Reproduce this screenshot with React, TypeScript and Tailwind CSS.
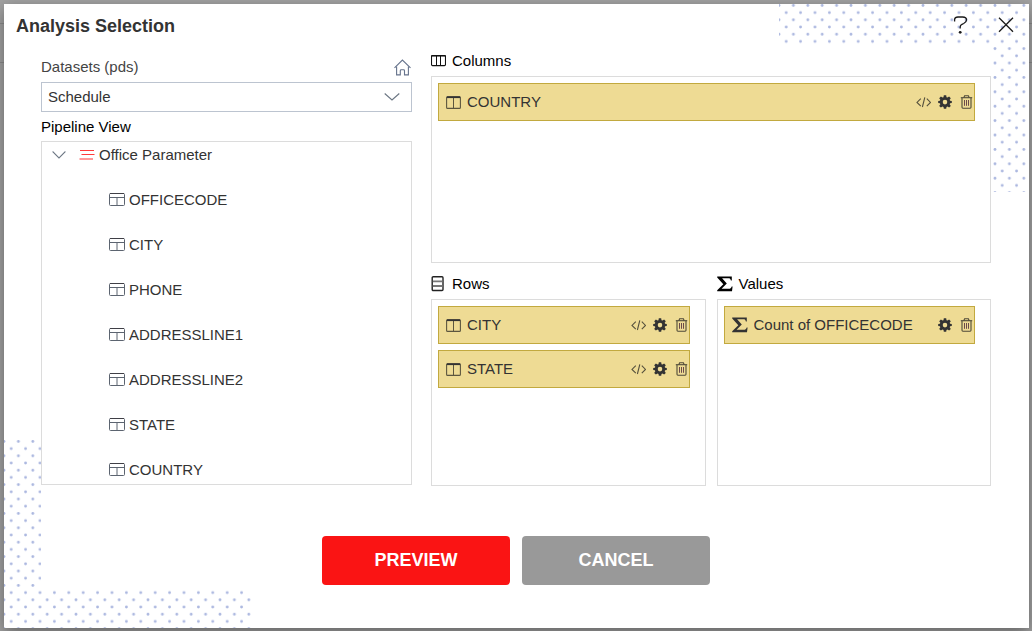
import { useState, type ReactNode } from 'react'

interface Field {
  name: string
  kind: 'dimension' | 'measure'
}

const DATASETS = ['Schedule']

const OFFICE_FIELDS = ['OFFICECODE', 'CITY', 'PHONE', 'ADDRESSLINE1', 'ADDRESSLINE2', 'STATE', 'COUNTRY']

const INITIAL_COLUMNS: Field[] = [{ name: 'COUNTRY', kind: 'dimension' }]
const INITIAL_ROWS: Field[] = [
  { name: 'CITY', kind: 'dimension' },
  { name: 'STATE', kind: 'dimension' },
]
const INITIAL_VALUES: Field[] = [{ name: 'Count of OFFICECODE', kind: 'measure' }]

function Dots({ id, className }: { id: string; className: string }) {
  return (
    <svg aria-hidden="true" width="250" height="188" className={className}>
      <defs>
        <pattern id={id} width="14.4" height="14.4" patternUnits="userSpaceOnUse">
          <circle cx="0" cy="1.5" r="1.4" fill="#aab6df" />
          <circle cx="14.4" cy="1.5" r="1.4" fill="#aab6df" />
          <circle cx="7.2" cy="8.7" r="1.4" fill="#aab6df" />
        </pattern>
      </defs>
      <rect width="250" height="188" fill={`url(#${id})`} />
    </svg>
  )
}

function HelpIcon() {
  return (
    <svg width="16" height="20" viewBox="0 0 16 20" fill="none" stroke="#1a1a1a" strokeWidth="1.3">
      <path d="M2.6 6.4V4.6C2.6 2.8 4 2 6 2h4.6c2.4 0 3.9 1 3.9 3 0 1.8-1.2 2.7-2.8 3.5L10 9.3c-1.3.7-1.8 1.4-1.8 2.6v1.5" />
      <circle cx="8.2" cy="17.3" r="1.4" fill="#1a1a1a" stroke="none" />
    </svg>
  )
}

function CloseIcon() {
  return (
    <svg width="16" height="16" viewBox="0 0 16 16" stroke="#1a1a1a" strokeWidth="1.3">
      <path d="M1 .8l14 14M15 .8L1 14.8" />
    </svg>
  )
}

function HomeIcon() {
  return (
    <svg width="18" height="17" viewBox="0 0 18 17" fill="none" stroke="#66738c" strokeWidth="1.1">
      <path d="M.5 8.9L8.4 1.1l8.1 7.8" />
      <path d="M2.6 7.5v8.4h3.7v-4.2c0-.6.3-.9.9-.9h2.4c.6 0 .9.3.9.9v4.2h3.9V7.5" />
    </svg>
  )
}

function ChevronIcon({ width, className }: { width: number; className?: string }) {
  return (
    <svg width={width} height="8" viewBox="0 0 16 8" preserveAspectRatio="none" fill="none" stroke="#6b7683" strokeWidth="1.1" className={className}>
      <path d="M.7.5L8 7 15.3.5" />
    </svg>
  )
}

function ListIcon() {
  return (
    <svg width="16" height="12" viewBox="0 0 16 12" fill="none">
      <path d="M1 1.5h14" stroke="#ff3b3b" />
      <path d="M2.5 5.5h13" stroke="#ff3b3b" />
      <path d="M.5 10h13.5" stroke="#ff8080" strokeWidth="1.6" />
    </svg>
  )
}

function TableIcon() {
  return (
    <svg width="16" height="14" viewBox="0 0 16 14" fill="none" stroke="#5c6470">
      <rect x=".5" y=".5" width="15" height="12" rx="1" />
      <path d="M.5 4.5h15M8 4.5v8" />
      <path d="M1 .5h14" stroke="#3f3f46" />
    </svg>
  )
}

function ColumnsIcon() {
  return (
    <svg width="15" height="12" viewBox="0 0 15 12" fill="none" stroke="#111">
      <rect x=".5" y=".6" width="14" height="10" rx="1" strokeWidth="1.1" />
      <path d="M5.5 1v9.6M9.5 1v9.6" />
      <path d="M.5.7h14" strokeWidth="1.4" />
    </svg>
  )
}

function RowsIcon() {
  return (
    <svg width="15" height="16" viewBox="0 0 15 16" fill="none" stroke="#222">
      <rect x="1.2" y=".7" width="10.8" height="13.8" rx="1" strokeWidth="1.4" />
      <path d="M1.8 5.3h9.6M1.8 10h9.6" stroke="#777" strokeWidth="1.8" />
    </svg>
  )
}

function SplitIcon() {
  return (
    <svg width="15" height="13" viewBox="0 0 15 13" fill="none" stroke="#5c563f">
      <rect x=".6" y=".8" width="13.8" height="11.6" rx="1" strokeWidth="1.1" />
      <path d="M7.5 1v11" />
      <path d="M.8 1.2h13.4" stroke="#333" strokeWidth="1.8" />
    </svg>
  )
}

function SigmaIcon({ color }: { color: string }) {
  return (
    <svg width="16" height="16" viewBox="0 0 16 16" fill={color}>
      <path d="M.2.4h14.6v4h-.9c-.4-1.5-1-2.1-2.6-2.1H5.1l4.7 5.2-5.2 5.3h7c1.8 0 2.6-.7 3.1-2.4h.9l-.6 4.9H.2v-1L6.3 8.3.2 1.4z" />
    </svg>
  )
}

function CodeIcon() {
  return (
    <svg width="15" height="14" viewBox="0 0 15 14" fill="none" stroke="#55503c" strokeWidth="1.1">
      <path d="M4.8 3.6L1 7.4l3.8 3.8M10.8 3.6l3.7 3.8-3.7 3.8M8.8 2.4L6.4 12" />
    </svg>
  )
}

function GearIcon() {
  return (
    <svg width="14" height="14" viewBox="0 0 14 14" fill="#333">
      <path
        fillRule="evenodd"
        d="M5.8.3h2.4l.3 1.9 1 .4 1.6-1.1 1.7 1.7-1.1 1.6.4 1 1.7.3v1.9l-1.7.3-.4 1 1.1 1.6-1.7 1.7-1.6-1.1-1 .4-.3 1.8H5.8l-.3-1.8-1-.4-1.6 1.1-1.7-1.7 1.1-1.6-.4-1L.2 8V6.1l1.7-.3.4-1-1.1-1.6 1.7-1.7 1.6 1.1 1-.4zM7 4.8a2.3 2.3 0 100 4.6 2.3 2.3 0 000-4.6z"
      />
    </svg>
  )
}

function TrashIcon() {
  return (
    <svg width="14" height="14" viewBox="0 0 14 14" fill="none" stroke="#4f4a38">
      <path d="M1.8 2.7h11.4" strokeWidth="1.1" />
      <path d="M4.8 2.7L5.6.8h3.8l.8 1.9" strokeWidth="1.1" />
      <path d="M3 2.9v9.4c0 .6.3.9.9.9h7.2c.6 0 .9-.3.9-.9V2.9" strokeWidth="1.1" />
      <path d="M5.5 5v5.8M7.5 5v5.8M9.5 5v5.8" stroke="#6b4a4a" />
    </svg>
  )
}

function FieldChip({ field, onRemove }: { field: Field; onRemove: () => void }) {
  return (
    <li className="flex h-[38px] items-center gap-[6px] border border-[#c2a93f] bg-[#eedb94] pr-px pl-[7px]">
      {field.kind === 'measure' ? <SigmaIcon color="#333" /> : <SplitIcon />}
      <span className="min-w-0 flex-1 truncate text-[#333]">{field.name}</span>
      <div className="flex items-center gap-[7px]">
        {field.kind === 'dimension' && (
          <button type="button" aria-label={`Edit expression for ${field.name}`}><CodeIcon /></button>
        )}
        <button type="button" aria-label={`Settings for ${field.name}`}><GearIcon /></button>
        <button type="button" aria-label={`Remove ${field.name}`} onClick={onRemove}><TrashIcon /></button>
      </div>
    </li>
  )
}

interface DropZoneProps {
  title: string
  icon: ReactNode
  initial: Field[]
  headClass: string
}

function DropZone({ title, icon, initial, headClass }: DropZoneProps) {
  const [fields, setFields] = useState(initial)
  return (
    <section className="min-w-0">
      <h2 className={`flex items-center gap-[6px] text-black ${headClass}`}>
        {icon}
        {title}
      </h2>
      <ul className="flex min-h-[187px] flex-col gap-[6px] border border-[#dcdcdc] bg-white pt-[6px] pr-[15px] pb-[6px] pl-[6px]">
        {fields.map(f => (
          <FieldChip key={f.name} field={f} onRemove={() => setFields(fields.filter(x => x !== f))} />
        ))}
      </ul>
    </section>
  )
}

function PipelineTree() {
  const [open, setOpen] = useState(true)
  return (
    <div className="h-[344px] overflow-hidden border border-[#dcdcdc] bg-white leading-[26px] text-[#333]">
      <button type="button" aria-expanded={open} onClick={() => setOpen(!open)} className="flex h-[45px] w-full items-start pl-[10px]">
        <span className="flex h-[26px] items-center">
          <ChevronIcon width={14} className="mr-[13px]" />
          <ListIcon />
          <span className="ml-1">Office Parameter</span>
        </span>
      </button>
      {open && (
        <ul className="pl-[67px]">
          {OFFICE_FIELDS.map(name => (
            <li key={name} className="h-[45px]">
              <span className="flex h-[26px] items-center gap-1">
                <TableIcon />
                {name}
              </span>
            </li>
          ))}
        </ul>
      )}
    </div>
  )
}

export default function App() {
  const [dataset, setDataset] = useState(DATASETS[0])

  return (
    <div className="relative flex min-h-screen bg-[#a3a3a3] pt-1 pr-[3px] pb-[3px] pl-1 font-['Liberation_Sans',Arial,sans-serif] text-[15px] leading-5">
      <div className="absolute inset-x-0 top-[23px] h-10 border-y border-[#8c8c8c]" />
      <div role="dialog" aria-labelledby="dialog-title" className="relative flex-1 bg-white pb-[38px] shadow-[0_5px_15px_rgba(0,0,0,0.4)]">
        <Dots id="dots-top" className="absolute top-0 right-0" />
        <Dots id="dots-bottom" className="absolute bottom-0 left-0" />

        <header className="relative flex h-[42px] items-center justify-between pr-[15px] pl-3">
          <h1 id="dialog-title" className="pt-px text-lg font-bold text-[#333]">Analysis Selection</h1>
          <div className="flex items-center gap-[30px]">
            <button type="button" aria-label="Help"><HelpIcon /></button>
            <button type="button" aria-label="Close"><CloseIcon /></button>
          </div>
        </header>

        <main className="relative mr-[38px] ml-[37px] bg-white pb-[5px]">
          <div className="grid grid-cols-[371fr_560fr] gap-[19px]">
            <div className="min-w-0">
              <div className="flex h-9 items-center justify-between pt-[6px]">
                <label htmlFor="dataset" className="text-[#444]">Datasets (pds)</label>
                <button type="button" aria-label="Home"><HomeIcon /></button>
              </div>
              <div className="relative">
                <select
                  id="dataset"
                  value={dataset}
                  onChange={e => setDataset(e.target.value)}
                  className="block h-[30px] w-full appearance-none border border-[#bcc4d0] bg-white pr-8 pl-[6px] text-[#333]"
                >
                  {DATASETS.map(d => <option key={d} value={d}>{d}</option>)}
                </select>
                <ChevronIcon width={16} className="pointer-events-none absolute top-[11px] right-3" />
              </div>
              <h2 className="flex h-[29px] items-center text-black">Pipeline View</h2>
              <PipelineTree />
            </div>

            <div className="min-w-0">
              <DropZone title="Columns" icon={<ColumnsIcon />} initial={INITIAL_COLUMNS} headClass="h-[30px]" />
              <div className="grid grid-cols-2 gap-[11px]">
                <DropZone title="Rows" icon={<RowsIcon />} initial={INITIAL_ROWS} headClass="h-9 pt-[6px]" />
                <DropZone title="Values" icon={<SigmaIcon color="#000" />} initial={INITIAL_VALUES} headClass="h-9 pt-[6px]" />
              </div>
            </div>
          </div>

          <div className="flex justify-center gap-3 pt-[50px] text-lg font-bold text-white">
            <button type="button" className="h-[49px] w-[188px] rounded bg-[#fa1414] pb-[2px]">PREVIEW</button>
            <button type="button" className="h-[49px] w-[188px] rounded bg-[#999] pb-[2px]">CANCEL</button>
          </div>
        </main>
      </div>
    </div>
  )
}
